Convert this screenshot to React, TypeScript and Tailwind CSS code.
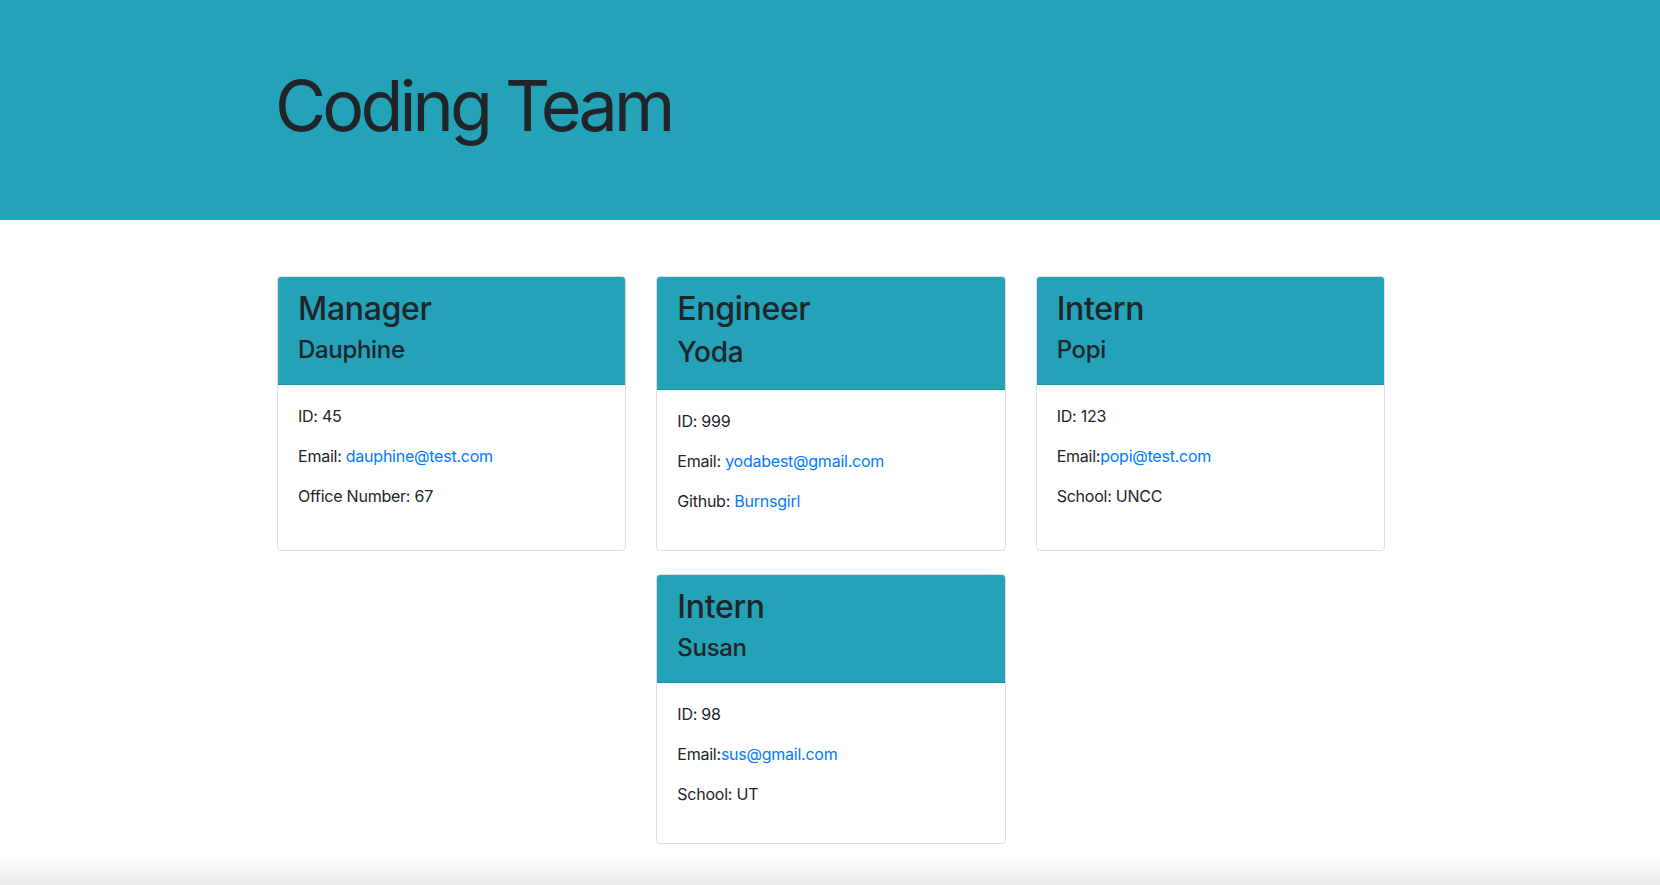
import React from 'react';

interface Member {
  role: string;
  name: string;
  big?: boolean;
  id: string;
  email: string;
  tight?: boolean;
  extraLabel: string;
  extraValue: string;
  extraLink?: boolean;
}

const team: Member[] = [
  { role: 'Manager', name: 'Dauphine', id: '45', email: 'dauphine@test.com', extraLabel: 'Office Number', extraValue: '67' },
  { role: 'Engineer', name: 'Yoda', big: true, id: '999', email: 'yodabest@gmail.com', extraLabel: 'Github', extraValue: 'Burnsgirl', extraLink: true },
  { role: 'Intern', name: 'Popi', id: '123', email: 'popi@test.com', tight: true, extraLabel: 'School', extraValue: 'UNCC' },
  { role: 'Intern', name: 'Susan', id: '98', email: 'sus@gmail.com', tight: true, extraLabel: 'School', extraValue: 'UT' },
];

const Card: React.FC<{ m: Member }> = ({ m }) => (
  <div className="w-1/3 px-[15px] mb-[23px]">
    <div className="h-full flex flex-col rounded-[4px] border border-[#dfdfdf] bg-white overflow-hidden">
      <div className="bg-[#23a2b8] px-5 pt-[13px] pb-[11px] border-b border-[#1f8ea1] tracking-[-0.02em]">
        <h2 className="text-[32px] leading-[1.2] font-medium mb-2">{m.role}</h2>
        {m.big ? (
          <h3 className="text-[28px] leading-[1.2] font-medium mb-2">{m.name}</h3>
        ) : (
          <h4 className="text-[24px] leading-[1.2] font-medium mb-2">{m.name}</h4>
        )}
      </div>
      <div className="px-5 pt-[19px] pb-[21px] text-[16px] leading-6 tracking-[-0.015em]">
        <p className="mb-4">ID: {m.id}</p>
        <p className="mb-4">
          Email:{m.tight ? '' : ' '}
          <a className="text-[#007bff]" href="#">{m.email}</a>
        </p>
        <p className="mb-4">
          {m.extraLabel}:{' '}
          {m.extraLink ? <a className="text-[#007bff]" href="#">{m.extraValue}</a> : m.extraValue}
        </p>
      </div>
    </div>
  </div>
);

export default function App() {
  return (
    <div className="min-h-screen bg-white text-[#212529] font-['Inter','Liberation_Sans',sans-serif]">
      {/* jumbotron */}
      <header className="bg-[#23a2b8] h-[220px]">
        <div className="mx-auto w-[1140px] px-[15px] pt-[64px]">
          <h1 className="text-[70px] leading-[1.2] font-normal tracking-[-0.055em]">Coding Team</h1>
        </div>
      </header>

      <main className="mx-auto w-[1140px] pt-[56px] pl-[2px]">
        <div className="flex flex-wrap justify-center">
          {team.map((m) => (
            <Card key={m.name} m={m} />
          ))}
        </div>
      </main>

      <div className="fixed bottom-0 left-0 right-0 h-[30px] pointer-events-none bg-linear-to-b from-white/0 to-[#ebebeb]" />
    </div>
  );
}
